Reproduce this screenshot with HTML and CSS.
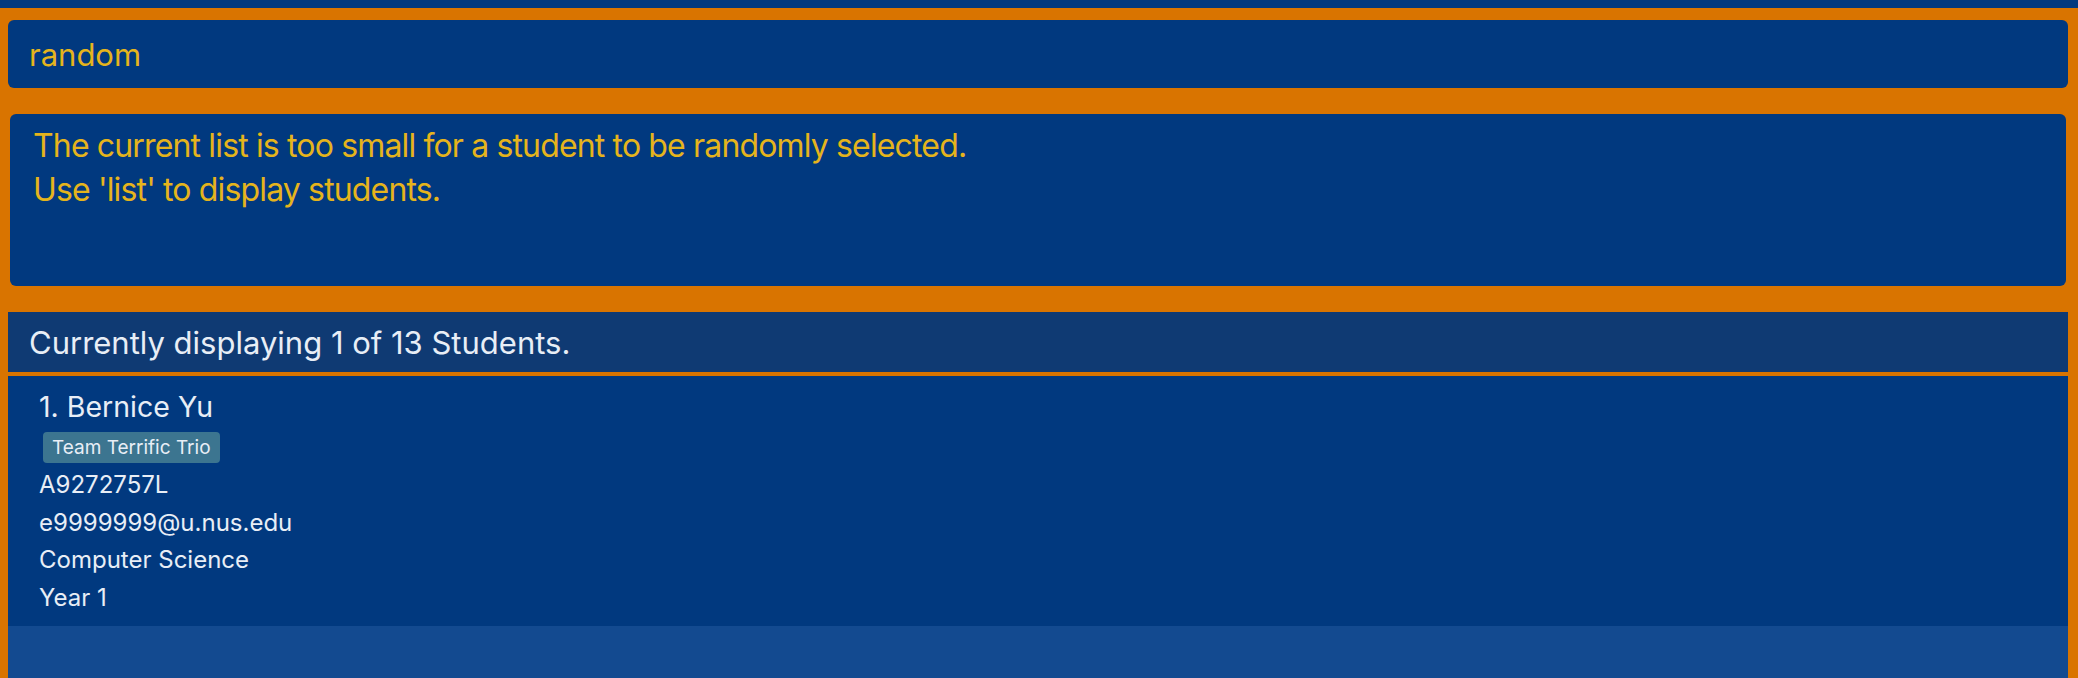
FILE: index.html
```html
<!DOCTYPE html>
<html lang="en">
<head>
<meta charset="utf-8">
<title>Students</title>
<link rel="stylesheet" href="styles.css">
</head>
<body>
<div class="app">
  <div class="topbar"></div>
  <div class="main">
    <div class="command-box">random</div>
    <div class="result-box">
      <div class="result-line">The current list is too small for a student to be randomly selected.</div>
      <div class="result-line">Use 'list' to display students.</div>
    </div>
    <div class="list-panel">
      <div class="list-header">Currently displaying 1 of 13 Students.</div>
      <div class="card">
        <div class="card-name">1. Bernice Yu</div>
        <div class="tags"><span class="tag">Team Terrific Trio</span></div>
        <div class="card-field">A9272757L</div>
        <div class="card-field">e9999999@u.nus.edu</div>
        <div class="card-field">Computer Science</div>
        <div class="card-field">Year 1</div>
      </div>
      <div class="list-empty"></div>
    </div>
  </div>
</div>
</body>
</html>
```

FILE: styles.css
```css
html, body {
  margin: 0;
  padding: 0;
  height: 100%;
  overflow: hidden;
}

body {
  background: #d97400;
  font-family: Inter, "Noto Sans", sans-serif;
}

.app {
  display: flex;
  flex-direction: column;
  height: 678px;
}

.topbar {
  height: 8px;
  background: #01397f;
  flex: none;
}

.main {
  flex: 1;
  display: flex;
  flex-direction: column;
  padding: 12px 10px 0 8px;
  min-height: 0;
}

.command-box {
  height: 68px;
  flex: none;
  background: #01397f;
  border-radius: 6px;
  color: #e5b41c;
  font-size: 31px;
  display: flex;
  align-items: center;
  padding-left: 21px;
  box-sizing: border-box;
}

.result-box {
  margin: 26px 2px 0 2px;
  height: 172px;
  flex: none;
  box-sizing: border-box;
  background: #01397f;
  border-radius: 6px;
  color: #e5b41c;
  font-size: 32px;
  line-height: 44px;
  letter-spacing: -0.85px;
  padding: 10px 0 0 23px;
}

.list-panel {
  margin-top: 26px;
  flex: 1;
  display: flex;
  flex-direction: column;
  min-height: 0;
}

.list-header {
  flex: none;
  box-sizing: border-box;
  height: 64px;
  background: #0f3a73;
  border-bottom: 4px solid #d97400;
  color: #e8eef6;
  font-size: 31px;
  display: flex;
  align-items: center;
  padding: 0 0 0 21px;
}

.card {
  flex: none;
  height: 250px;
  box-sizing: border-box;
  background: #01397f;
  color: #e8eef6;
  padding: 13px 0 0 31px;
}

.card-name {
  font-size: 28.5px;
  line-height: 36px;
}

.tags {
  margin-top: 7px;
  display: flex;
}

.tag {
  margin-left: 4px;
  background: #3c7590;
  border-radius: 4px;
  font-size: 19px;
  line-height: 31px;
  height: 31px;
  padding: 0 9px;
}

.card-field {
  font-size: 24px;
  line-height: 37.7px;
}

.tags + .card-field {
  margin-top: 3px;
}

.list-empty {
  flex: 1;
  background: #134a90;
}
```
